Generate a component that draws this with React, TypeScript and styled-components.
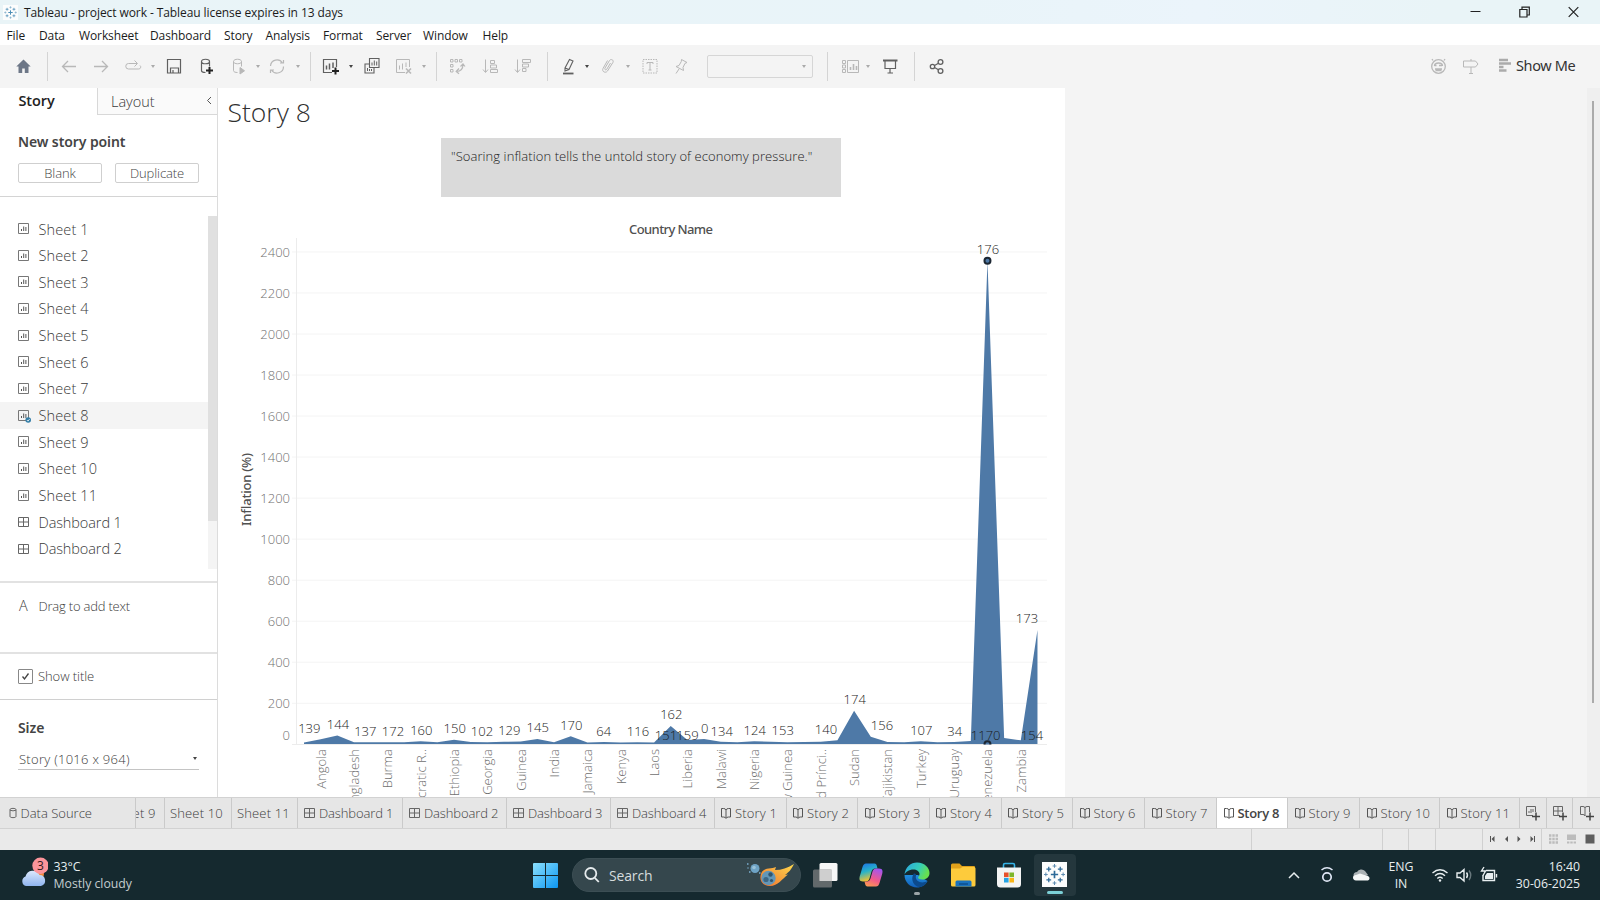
import React from "react";
import styled, { createGlobalStyle } from "styled-components";

const ui = `"Open Sans", "Noto Sans", sans-serif`;
const book = `"Noto Sans", "Open Sans", sans-serif`;
const light = `"Open Sans", "Noto Sans", sans-serif`;

const Global = createGlobalStyle`
  * { box-sizing: border-box; }
  body { margin: 0; background: #fff; overflow: hidden; }
  svg { display: block; flex: none; }
  svg text { white-space: pre; }
`;

const Window = styled.div`
  width: 1600px;
  height: 900px;
  display: flex;
  flex-direction: column;
  font-family: ${light};
  font-weight: 350;
  color: #333;
  overflow: hidden;
  white-space: nowrap;
`;

/* ---------- title bar and menu ---------- */
const TitleBar = styled.header`
  height: 24px;
  flex: none;
  display: flex;
  align-items: center;
  padding: 0 21px 0 3px;
  background: linear-gradient(90deg, #e9f4f7 0, #e9f4f9 60%, #ebf4fb 75%, #e9f4f7 90%);
`;
const WindowTitle = styled.span`
  margin-left: 6px;
  font: 400 12px ${ui};
  letter-spacing: -0.08px;
  color: #1b1b1b;
  flex: 1;
`;
const WindowButtons = styled.div`
  display: flex;
  gap: 38px;
`;
const MenuBar = styled.nav`
  height: 21px;
  flex: none;
  display: flex;
  align-items: center;
  padding: 1px 0 0 6.5px;
  background: #fff;
`;
const MenuItem = styled.span<{ $w: number }>`
  width: ${(p) => p.$w}px;
  font: 400 12px ${ui};
  letter-spacing: -0.1px;
  color: #1b1b1b;
`;

/* ---------- toolbar ---------- */
const Toolbar = styled.div`
  height: 43px;
  flex: none;
  display: flex;
  align-items: center;
  background: #f4f4f4;
  padding: 0 24px 1px 0;
`;
const Tool = styled.span<{ $ml: number; $dim?: boolean }>`
  width: 20px;
  margin-left: ${(p) => p.$ml}px;
  padding-bottom: 1px;
  flex: none;
  color: ${(p) => (p.$dim ? "#b8b8b8" : "#606060")};
`;
const Caret = styled.span<{ $ml: number; $dim?: boolean }>`
  width: 8px;
  margin-left: ${(p) => p.$ml}px;
  flex: none;
  display: flex;
  justify-content: center;
  &::after {
    content: "";
    border: 2.5px solid transparent;
    border-top: 3px solid ${(p) => (p.$dim ? "#aaa" : "#444")};
    border-bottom: 0;
  }
`;
const Separator = styled.span<{ $ml: number }>`
  width: 1px;
  height: 29px;
  margin-left: ${(p) => p.$ml}px;
  flex: none;
  background: #d4d4d4;
`;
const FitSelect = styled.span`
  width: 106px;
  height: 23px;
  margin-left: 16px;
  flex: none;
  display: flex;
  align-items: center;
  justify-content: flex-end;
  padding-right: 4px;
  border: 1px solid #d6d6d6;
  border-radius: 2px;
`;
const Spacer = styled.span`
  flex: 1;
`;
const ShowMe = styled.span`
  display: flex;
  align-items: center;
  gap: 5px;
  margin-left: 18.5px;
  padding-bottom: 2px;
  width: 77px;
  font: 400 14.5px ${book};
  letter-spacing: -0.35px;
  color: #333;
`;

/* ---------- body ---------- */
const Body = styled.main`
  flex: 1;
  min-height: 0;
  display: flex;
`;
const Sidebar = styled.aside`
  width: 218px;
  flex: none;
  display: flex;
  flex-direction: column;
  background: #fff;
  border-right: 1px solid #dcdcdc;
  color: #3a3a3a;
`;
const PaneTabs = styled.div`
  display: flex;
  height: 27px;
  flex: none;
`;
const ActivePane = styled.div`
  width: 97px;
  padding: 3px 0 0 18.5px;
  font-size: 14.5px;
  line-height: 20px;
  font-weight: 600;
  letter-spacing: -0.1px;
  color: #222;
`;
const OtherPane = styled.div`
  flex: 1;
  display: flex;
  justify-content: space-between;
  padding: 3px 4px 0 13px;
  font-size: 14.5px;
  line-height: 22px;
  border-left: 1px solid #d8d8d8;
  border-bottom: 1px solid #d8d8d8;
  background: #fafafa;
`;
const PaneHeading = styled.h3<{ $top: number }>`
  margin: ${(p) => p.$top}px 0 0 18px;
  font: 600 14px/20px ${book};
  letter-spacing: -0.1px;
  color: #444;
`;
const NewPoint = styled.section`
  height: 82px;
  flex: none;
  border-bottom: 1px solid #d4d4d4;
`;
const ButtonRow = styled.div`
  display: flex;
  gap: 13px;
  margin: 11px 0 0 18px;
`;
const SmallButton = styled.button`
  width: 84px;
  height: 20px;
  padding: 0;
  border: 1px solid #cfcfcf;
  border-radius: 2px;
  background: #fff;
  font: 350 13px/18px ${light};
  letter-spacing: -0.1px;
  color: #444;
`;
const ListArea = styled.section`
  height: 385.5px;
  flex: none;
  display: flex;
  padding-top: 18.7px;
  border-bottom: 2px solid #e2e2e2;
`;
const SheetList = styled.div`
  flex: 1;
`;
const SheetRow = styled.div<{ $on?: boolean; $tight?: boolean }>`
  height: 26.67px;
  display: flex;
  align-items: center;
  gap: ${(p) => (p.$tight ? 8.5 : 7.5)}px;
  padding: 0 0 0 17px;
  font-size: 14.5px;
  letter-spacing: ${(p) => (p.$tight ? "-0.1px" : "0.12px")};
  background: ${(p) => (p.$on ? "#f4f4f4" : "transparent")};
`;
const ListScroll = styled.div`
  width: 9.5px;
  height: 353px;
  background: #f4f4f4;
  &::before {
    content: "";
    display: block;
    height: 305px;
    background: #e0e0e0;
  }
`;
const DragText = styled.section`
  height: 71px;
  flex: none;
  display: flex;
  gap: 9.5px;
  padding: 13px 0 0 19px;
  font-size: 13px;
  line-height: 20px;
  letter-spacing: -0.2px;
  border-bottom: 2px solid #e2e2e2;
`;
const LetterA = styled.span`
  width: 10px;
  font-size: 14.5px;
`;
const TitleToggle = styled.section`
  height: 46.5px;
  flex: none;
  display: flex;
  align-items: center;
  gap: 5px;
  padding-left: 18px;
  font-size: 13px;
  letter-spacing: -0.07px;
  border-bottom: 1px solid #d0d0d0;
`;
const CheckBox = styled.span`
  width: 15px;
  height: 15px;
  border: 1px solid #888;
  border-radius: 1px;
`;
const SizeSelect = styled.div`
  display: flex;
  align-items: center;
  justify-content: space-between;
  width: 181px;
  height: 22px;
  margin: 10.5px 0 0 18px;
  padding-left: 1px;
  font-size: 13px;
  letter-spacing: 0.28px;
  border-bottom: 1px solid #c4c4c4;
`;

/* ---------- story canvas ---------- */
const Canvas = styled.section`
  width: 847px;
  flex: none;
  display: flex;
  flex-direction: column;
  background: #fff;
  overflow: hidden;
`;
const StoryTitle = styled.h1`
  margin: 8px 0 0 9.5px;
  height: 42px;
  flex: none;
  font-size: 26.5px;
  line-height: 33px;
  font-weight: 350;
  color: #303030;
`;
const Caption = styled.div`
  width: 400px;
  height: 59px;
  flex: none;
  margin-left: 223px;
  padding: 8px 10px;
  background: #dadada;
  font-size: 13px;
  line-height: 20px;
  letter-spacing: 0.07px;
  color: #222;
`;
const Backdrop = styled.div`
  flex: 1;
  display: flex;
  justify-content: flex-end;
  background: #f4f4f4;
`;
const PageScroll = styled.div`
  width: 13px;
  padding: 13px 0 0 5px;
  background: #efefef;
  &::before {
    content: "";
    display: block;
    width: 2px;
    height: 602px;
    background: #ababab;
  }
`;

/* ---------- bottom tabs and status ---------- */
const TabStrip = styled.nav`
  height: 32px;
  flex: none;
  display: flex;
  background: #e6e6e6;
  border-top: 1px solid #d2d2d2;
  border-bottom: 1px solid #d2d2d2;
`;
const Tab = styled.div<{ $w: number; $on?: boolean; $cut?: boolean; $ls?: number; $pl?: number }>`
  width: ${(p) => p.$w}px;
  flex: none;
  display: flex;
  align-items: center;
  justify-content: ${(p) => (p.$cut ? "flex-end" : "flex-start")};
  gap: 3px;
  padding: ${(p) => (p.$cut ? "0 8px 0 0" : `0 0 0 ${p.$pl ?? 5.5}px`)};
  overflow: hidden;
  border-right: 1px solid #cacaca;
  background: ${(p) => (p.$on ? "#fff" : "transparent")};
  font-size: 13px;
  letter-spacing: ${(p) => p.$ls ?? 0.15}px;
  font-weight: ${(p) => (p.$on ? 600 : 350)};
  color: ${(p) => (p.$on ? "#444" : "#3c3c3c")};
`;
const StatusBar = styled.div`
  height: 21px;
  flex: none;
  display: flex;
  justify-content: flex-end;
  background: #eaeaea;
`;
const StatusCell = styled.div<{ $w: number }>`
  width: ${(p) => p.$w}px;
  display: flex;
  align-items: center;
  justify-content: center;
  padding: 0 0 2px 1px;
  border-left: 1px solid #d0d0d0;
`;

/* ---------- taskbar ---------- */
const Taskbar = styled.footer`
  height: 50px;
  flex: none;
  display: flex;
  align-items: center;
  background: #15292f;
  font-family: ${ui};
  font-weight: 400;
  color: #e8eef0;
`;
const Weather = styled.div`
  width: 533px;
  display: flex;
  align-items: center;
  gap: 5.5px;
  padding: 1px 0 0 19px;
  font-size: 12.3px;
  line-height: 16.6px;
  letter-spacing: -0.03px;
`;
const Dim = styled.div`
  color: #c3cdd0;
`;
const SearchBox = styled.div`
  width: 229px;
  height: 34px;
  margin: 0 11px 0 14px;
  display: flex;
  align-items: center;
  padding: 0 5px 0 11px;
  gap: 9px;
  border-radius: 17px;
  border: 1px solid #3c4e54;
  background: #35474d;
  font-size: 14px;
  letter-spacing: -0.15px;
  color: #d5dcde;
`;
const Apps = styled.div`
  display: flex;
  padding-left: 9px;
`;
const AppSlot = styled.div<{ $on?: boolean; $run?: boolean }>`
  width: ${(p) => (p.$on ? 42 : 46)}px;
  height: 42px;
  margin-left: ${(p) => (p.$on ? 1.5 : 0)}px;
  display: flex;
  flex-direction: column;
  align-items: center;
  padding-top: 8px;
  border-radius: 4px;
  background: ${(p) => (p.$on ? "#24373d" : "transparent")};
  &::after {
    content: "";
    margin-top: 3.5px;
    width: ${(p) => (p.$on ? 16 : 6)}px;
    height: 3px;
    border-radius: 2px;
    background: ${(p) => (p.$on ? "#7cd0d6" : p.$run ? "#9ba5a8" : "transparent")};
  }
`;
const Tray = styled.div`
  flex: 1;
  display: flex;
  align-items: center;
  justify-content: flex-end;
  padding-right: 20px;
  font-size: 12.3px;
  line-height: 16.6px;
`;
const Language = styled.div`
  width: 30px;
  margin: 0 15px 0 16px;
  padding-top: 1px;
  text-align: center;
`;
const Clock = styled.div`
  width: 67px;
  margin-left: 15px;
  padding-top: 1px;
  text-align: right;
`;

/* ---------- icons ---------- */
const Icon = ({ children, w = 20, h = 20 }: { children: React.ReactNode; w?: number; h?: number }) => (
  <svg width={w} height={h} viewBox={`0 0 ${w} ${h}`} fill="none" stroke="currentColor" strokeWidth="1">
    {children}
  </svg>
);
const cyl = "M5.5 5.5c0-3 8-3 8 0s-8 3-8 0v9c0 1.5 2 2 4 2M13.5 5.5v5";

const icons: Record<string, React.ReactNode> = {
  home: <path d="M9.500 3.500 2.300 10.500H4.500V17h3.700v-4.500h2.600V17h3.700v-6.500h2.200z" fill="#6d7787" stroke="none" />,
  back: <path d="M17 10.500H3.500M9 5 3.500 10.500 9 16" strokeWidth="1.300" />,
  forward: <path d="M3 10.500h13.500M11 5l5.500 5.500L11 16" strokeWidth="1.300" />,
  replay: <path d="M14 7.500H5.500a2.500 2.500 0 0 0 0 5.500h10a2 2 0 0 0 1.500-3.500M11.500 4.500l3 3-3 3" />,
  save: <path d="M3.500 3.500h13v13.500h-13zM6.500 17v-5h8v5M9 17v-3" strokeWidth="1.200" />,
  addData: (
    <>
      <path d={cyl} strokeWidth="1.200" />
      <path d="M13.500 11v7M10 14.500h7" stroke="#222" strokeWidth="2" />
    </>
  ),
  playData: (
    <>
      <path d={cyl} />
      <path d="M12 11.500v6.500l4.500-3.200z" fill="currentColor" />
    </>
  ),
  refresh: <path d="M3.500 10a6.500 6.500 0 0 1 12-3M16.500 10.500a6.500 6.500 0 0 1-12 3.500M13 7h3.500V4M7 14H3.500v3" strokeWidth="1.200" />,
  newSheet: (
    <>
      <path d="M11 16.500H2.500v-13h13V11" strokeWidth="1.200" />
      <path d="M5.500 13.500v-4M8.500 13.500v-6M12 12V6.500" strokeWidth="1.500" />
      <path d="M14.500 11.500v7M11 15h7" stroke="#222" strokeWidth="2" />
    </>
  ),
  duplicate: (
    <>
      <path d="M7.500 2.500h9.500v9H7.500zM7.500 8h-4.500v9h9v-5.500" strokeWidth="1.100" />
      <path d="M10 9.500v-3M12.300 9.500v-5M14.700 9.500v-4M5.500 15v-3M7.500 15v-2M9.500 15v-2" />
    </>
  ),
  clear: (
    <>
      <path d="M11 16.500H2.500v-13h13V11M5.500 13.500v-4M8.500 13.500v-6M12 11V6.500" />
      <path d="m12 12.500 5 5m0-5-5 5" strokeWidth="1.600" />
    </>
  ),
  swap: (
    <>
      <path d="M3.500 3.500h2.500v2.500h-2.500zM8 3.500h2.500v2.500H8zM12.500 3.500H15v2.500h-2.500zM3.500 8.500h2.500v2.500h-2.500zM3.500 13.500h2.500v2.500h-2.500z" />
      <path d="M16 8c0 5-2 7.500-6.500 7.500M12 12.500l-2.800 3 2.800 2.300M13.500 10.500 16 8l2 2.500" strokeWidth="1.200" />
    </>
  ),
  sortAsc: <path d="M4.500 3.500V16M2 13.500l2.500 3 2.500-3M9.500 4.500h4v3h-4zM9.500 9h6v3h-6zM9.500 13.500h7v3h-7z" />,
  sortDesc: <path d="M4.500 3.500V16M2 13.500l2.500 3 2.500-3M9.500 3.500h8v3h-8zM9.500 8h6v3h-6zM9.500 12.500h3.500v3h-3.500z" />,
  pen: (
    <>
      <path d="M4 17.500h10.500" strokeWidth="1.800" />
      <path d="M6 12 10.500 3.500l3.500 1.500-4 8.500L6 15zM6 12l4 1.500" strokeWidth="1.100" />
    </>
  ),
  clip: <path d="m7 12 4.500-7.500c1.500-2 4.500-.5 3.500 1.800L9.500 15c-2 2.700-6 .5-4.500-2.500l4.500-8M7 12c-.8 1.800 1 2.500 1.800 1.200L12.500 7" />,
  text: (
    <>
      <path d="M3 3.500h14v13.500H3z" strokeDasharray="1.500 1" />
      <path d="M7 8V6.500h6V8M10 6.500V14M8.500 14h3" />
    </>
  ),
  pin: <path d="m10.500 3.500 5.500 3-2 .8-2 4.200.5 3-7.500-4 3-1 2.300-4zM8 13l-3 4.500" />,
  fit: (
    <>
      <path d="M2.500 4.500h3v3h-3zM2.500 9h3v3h-3zM2.500 13.500h3v3h-3zM7.500 4.500h11v12h-11z" />
      <path d="M10.500 14v-3M13.500 14V8M16.500 14v-4" strokeWidth="1.600" />
    </>
  ),
  present: (
    <>
      <path d="M3 4.500h14.500" strokeWidth="2" />
      <path d="M5 5v7.500h10.500V5M10 12.500v4M7.500 17H13" strokeWidth="1.200" />
    </>
  ),
  share: (
    <g strokeWidth="1.300">
      <circle cx="5.500" cy="10.500" r="2.200" />
      <circle cx="13.500" cy="6" r="2.400" />
      <circle cx="13.500" cy="15" r="2.400" />
      <path d="m7.500 9.500 4-2.300M7.500 11.500l4 2.300" />
    </g>
  ),
  face: (
    <>
      <circle cx="10.500" cy="10.500" r="6.800" strokeWidth="1.300" />
      <path d="M6.500 10c0-4 8-4 8 0M6.500 9.500h2M11 9.500h3M7 13h7M7.500 14.500h6M5 4.500 4 3M16 4.500l1-1.500" strokeWidth="1.300" />
    </>
  ),
  sign: <path d="M2.500 5h12l2.500 3-2.500 3h-12zM10 3v2M10 11v7M8 17.500h4" />,
};

const SheetIcon = ({ checked }: { checked?: boolean }) => (
  <Icon w={14} h={14}>
    <path d="M1.500 1.500h10v10h-10z" stroke="#777" />
    <path d="M4.500 9V7M6.700 9V4.500M8.900 9V5" stroke="#555" />
    {checked && (
      <>
        <circle cx="11.200" cy="11" r="2.800" fill="#357fa8" stroke="none" />
        <path d="m10 11.100 1 1 1.600-2" stroke="#fff" strokeWidth=".8" />
      </>
    )}
  </Icon>
);
const GridIcon = () => (
  <Icon w={13} h={14}>
    <path d="M1.500 2.500h10v9h-10zM6.500 2.500v9M1.500 7h10" stroke="#666" />
  </Icon>
);
const BookIcon = () => (
  <Icon w={12} h={14}>
    <path d="M1.500 2.500h2q2 0 2.500 1.500 .5-1.500 2.500-1.500h2v8.500h-2q-2 0-2.500 1.500-.5-1.500-2.500-1.500h-2zM6 4v8" stroke="#555" />
  </Icon>
);
const DbIcon = () => (
  <Icon w={10} h={14}>
    <path d="M2 3.500c0-1.500 6-1.500 6 0v7c0 1.500-6 1.500-6 0zM2 4.200q3 1.300 6 0" stroke="#666" />
  </Icon>
);
const PlusIcon = ({ d }: { d: string }) => (
  <Icon w={18} h={18}>
    <path d={d} stroke="#666" />
    <path d="M12 8.500v8M8 12.500h8" stroke="#444" strokeWidth="1.500" />
  </Icon>
);
const TableauMark = ({ size, color }: { size: number; color: string }) => (
  <svg width={size} height={size} viewBox="0 0 24 24">
    <path d="M0 0h24v24H0z" fill="#fcfdfd" />
    <g stroke={color} strokeWidth="1.200">
      <path d="M12 8.500v7M8.500 12h7" strokeWidth="1.600" />
      <path d="M6.500 4.500v4.500M4.200 6.800h4.600M17.500 4.500v4.500M15.200 6.800h4.600M6.500 15v4.500M4.200 17.200h4.600M17.500 15v4.500M15.200 17.200h4.600" />
      <path d="M12 2v3.600M10.200 3.800h3.600M12 18.400V22M10.200 20.200h3.600M3.700 10.200v3.600M1.900 12h3.600M20.300 10.200v3.600M18.500 12h3.600" strokeWidth="1" opacity=".75" />
    </g>
  </svg>
);

/* ---------- data ---------- */
const menu: [string, number][] = [
  ["File", 32.5], ["Data", 40], ["Worksheet", 71], ["Dashboard", 74], ["Story", 41.5],
  ["Analysis", 57.5], ["Format", 53], ["Server", 47], ["Window", 59.5], ["Help", 40],
];

type Part = { k: string; ml: number; dim?: boolean };
const tools: Part[] = [
  { k: "home", ml: 13.5 }, { k: "|", ml: 13 }, { k: "back", ml: 11.5, dim: true }, { k: "forward", ml: 12, dim: true },
  { k: "replay", ml: 11.5, dim: true }, { k: "v", ml: 6, dim: true }, { k: "save", ml: 7.5 }, { k: "addData", ml: 12 },
  { k: "playData", ml: 11.5, dim: true }, { k: "v", ml: 6, dim: true }, { k: "refresh", ml: 5.5, dim: true },
  { k: "v", ml: 6.5, dim: true }, { k: "|", ml: 8.5 }, { k: "newSheet", ml: 10 }, { k: "v", ml: 6 },
  { k: "duplicate", ml: 7 }, { k: "clear", ml: 11.5, dim: true }, { k: "v", ml: 6, dim: true }, { k: "|", ml: 8.5 },
  { k: "swap", ml: 10, dim: true }, { k: "sortAsc", ml: 13.5, dim: true }, { k: "sortDesc", ml: 12.5, dim: true },
  { k: "|", ml: 13.5 }, { k: "pen", ml: 11.5 }, { k: "v", ml: 4 }, { k: "clip", ml: 6.5, dim: true },
  { k: "v", ml: 6.5, dim: true }, { k: "text", ml: 8, dim: true }, { k: "pin", ml: 11, dim: true },
];
const toolsAfter: Part[] = [
  { k: "|", ml: 14 }, { k: "fit", ml: 11.5, dim: true }, { k: "v", ml: 4, dim: true }, { k: "present", ml: 8.5 },
  { k: "|", ml: 13.5 }, { k: "share", ml: 12 },
];
const ToolPart = ({ k, ml, dim }: Part) =>
  k === "|" ? (
    <Separator $ml={ml} />
  ) : k === "v" ? (
    <Caret $ml={ml} $dim={dim} />
  ) : (
    <Tool $ml={ml} $dim={dim}>
      <Icon>{icons[k]}</Icon>
    </Tool>
  );

const sheets = [...Array.from({ length: 11 }, (_, i) => `Sheet ${i + 1}`), "Dashboard 1", "Dashboard 2"];

const stories = [72, 71.5, 71.5, 72, 71.5, 72, 72, 71, 72, 80, 80];
const dashboards = [105, 104, 104, 104];

/* Height of the area's edge at each country, left to right, in chart coordinates. */
const edge = [
  742.5, 739.3, 735.5, 742.3, 742.3, 742.3, 742.2, 741.3, 742.3, 739.7, 742, 742.3, 741.7, 741.5, 739, 742.3,
  736.3, 742.5, 742, 742.5, 742.3, 742.5, 726, 740, 739, 741.7, 742.3, 741.2, 741.7, 742.3, 742, 741.7, 740.3,
  710.7, 736.7, 742, 742.3, 741.3, 742.2, 742, 741, 261, 738, 740.3, 630,
];
const px = (i: number) => 304 + i * 16.67;
const countries = [
  "Angola", "Bangladesh", "Burma", "Democratic R..", "Ethiopia", "Georgia", "Guinea", "India", "Jamaica", "Kenya",
  "Laos", "Liberia", "Malawi", "Nigeria", "Papua New Guinea", "Sao Tome and Prínci..", "Sudan", "Tajikistan", "Turkey",
  "Uruguay", "Venezuela", "Zambia",
];
const marks: [string, number, number][] = [
  ["139", 309.3, 728], ["144", 338, 724], ["137", 365.3, 731.7], ["172", 393, 731], ["160", 421.3, 730],
  ["150", 454.7, 728.3], ["102", 482, 731.7], ["129", 509.3, 730], ["145", 537.7, 727.3], ["170", 571.3, 725],
  ["64", 603.7, 731], ["116", 638, 731], ["162", 671.3, 714], ["151", 666, 735], ["159", 687.5, 735],
  ["0", 704.7, 728.5], ["134", 721.7, 731], ["124", 754.7, 730], ["153", 782.7, 730], ["140", 826, 729],
  ["174", 854.7, 699], ["156", 882, 725], ["107", 921.3, 730], ["34", 954.7, 731], ["1170", 985.7, 735],
  ["154", 1032, 735], ["176", 988, 249], ["173", 1027, 618],
];

const Chart = () => (
  <svg width="847" height="600" viewBox="218 197 847 600" fontFamily={light} fontSize="13" fontWeight="350">
    <text x="671" y="233.500" fontFamily={book} fontWeight="500" textAnchor="middle" fill="#505050" textLength="84">Country Name</text>
    <text transform="translate(251 489.500) rotate(-90)" fontFamily={book} fontWeight="500" textAnchor="middle" fill="#505050" textLength="73">
      Inflation (%)
    </text>
    {Array.from({ length: 12 }, (_, i) => 2400 - i * 200).map((v) => {
      const y = 744.300 - v * 0.20515;
      return (
        <g key={v}>
          <path d={`M292 ${y}H1047`} stroke="#f4f4f4" />
          <text x="290" y={y + 4.800} textAnchor="end" fill="#707070">{v}</text>
        </g>
      );
    })}
    <text x="290" y="740" textAnchor="end" fill="#707070">0</text>
    <path d="M296.500 238V744M292 744.500H1047" stroke="#ececec" />
    <path d={`M304 744L${edge.map((y, i) => `${px(i)} ${y}`).join("L")}V744z`} fill="#4e79a7" />
    <clipPath id="plot">
      <path d="M296 238h752v506.500H296z" />
    </clipPath>
    <g clipPath="url(#plot)" fill="#4e79a7" stroke="#1c2733" strokeWidth="2">
      <circle cx={px(41)} cy="260.700" r="3" />
      <circle cx={px(41)} cy="744.300" r="3" />
    </g>
    {marks.map(([t, x, y]) => (
      <text key={t} x={x} y={y + 4.500} textAnchor="middle" fill="#1c1c1c">{t}</text>
    ))}
    {countries.map((c, i) => (
      <text key={c} transform={`translate(${px(i * 2 + 1) + 5} 749) rotate(-90)`} textAnchor="end" fill="#707070">{c}</text>
    ))}
  </svg>
);

export default function App() {
  return (
    <Window>
      <Global />
      <TitleBar>
        <TableauMark size={15} color="#4b8db5" />
        <WindowTitle>Tableau - project work - Tableau license expires in 13 days</WindowTitle>
        <WindowButtons>
          <Icon w={11} h={12}><path d="M.5 5.500h10" stroke="#222" /></Icon>
          <Icon w={11} h={12}><path d="M.8 3.500h7.200v7.500H.8zM3 3.500V1.200h7.300V9H8" stroke="#222" strokeWidth="1.200" /></Icon>
          <Icon w={11} h={12}><path d="m.7 1.200 9.600 9.600m0-9.600L.7 10.800" stroke="#222" strokeWidth="1.200" /></Icon>
        </WindowButtons>
      </TitleBar>
      <MenuBar>
        {menu.map(([t, w]) => <MenuItem key={t} $w={w}>{t}</MenuItem>)}
      </MenuBar>
      <Toolbar>
        {tools.map((t, i) => <ToolPart key={i} {...t} />)}
        <FitSelect><Caret $ml={0} $dim /></FitSelect>
        {toolsAfter.map((t, i) => <ToolPart key={i} {...t} />)}
        <Spacer />
        <Tool $ml={0} $dim><Icon>{icons.face}</Icon></Tool>
        <Tool $ml={12.5} $dim><Icon>{icons.sign}</Icon></Tool>
        <ShowMe>
          <Icon w={12} h={14}>
            <path d="M0 2h9M0 5.500h12M0 9h4.500M0 12.500h7.500" stroke="#ababab" strokeWidth="2.400" />
          </Icon>
          Show Me
        </ShowMe>
      </Toolbar>
      <Body>
        <Sidebar>
          <PaneTabs>
            <ActivePane>Story</ActivePane>
            <OtherPane>
              Layout
              <Icon w={8} h={20}><path d="M6 6 2.500 9.500 6 13" stroke="#555" /></Icon>
            </OtherPane>
          </PaneTabs>
          <NewPoint>
            <PaneHeading $top={17}>New story point</PaneHeading>
            <ButtonRow>
              <SmallButton>Blank</SmallButton>
              <SmallButton>Duplicate</SmallButton>
            </ButtonRow>
          </NewPoint>
          <ListArea>
            <SheetList>
              {sheets.map((s, i) => (
                <SheetRow key={s} $on={i === 7} $tight={i > 10}>
                  {i > 10 ? <GridIcon /> : <SheetIcon checked={i === 7} />}
                  {s}
                </SheetRow>
              ))}
            </SheetList>
            <ListScroll />
          </ListArea>
          <DragText><LetterA>A</LetterA>Drag to add text</DragText>
          <TitleToggle>
            <CheckBox><Icon w={13} h={13}><path d="m3.500 6.500 2 2.500 4-5.500" stroke="#444" strokeWidth="1.300" /></Icon></CheckBox>
            Show title
          </TitleToggle>
          <PaneHeading $top={17.5}>Size</PaneHeading>
          <SizeSelect>Story (1016 x 964)<Caret $ml={0} /></SizeSelect>
        </Sidebar>
        <Canvas>
          <StoryTitle>Story 8</StoryTitle>
          <Caption>"Soaring inflation tells the untold story of economy pressure."</Caption>
          <Chart />
        </Canvas>
        <Backdrop><PageScroll /></Backdrop>
      </Body>
      <TabStrip>
        <Tab $w={135.5} $pl={7.5} $ls={0}><DbIcon />Data Source</Tab>
        <Tab $w={29} $cut>Sheet 9</Tab>
        <Tab $w={67}>Sheet 10</Tab>
        <Tab $w={66}>Sheet 11</Tab>
        {dashboards.map((w, i) => <Tab key={i} $w={w} $ls={-0.12}><GridIcon />Dashboard {i + 1}</Tab>)}
        {stories.map((w, i) => <Tab key={i} $w={w} $on={i === 7} $ls={i === 7 ? -0.3 : 0.15}><BookIcon />Story {i + 1}</Tab>)}
        <Tab $w={27} $pl={4}><PlusIcon d="M9 11.500H2.500v-9h9V8M5 9V7M7 9V5M9 8V5" /></Tab>
        <Tab $w={26} $pl={4}><PlusIcon d="M9 11.500H2.500v-9h9V8M7 2.500v9M2.500 7h9" /></Tab>
        <Tab $w={28} $pl={4.5}><PlusIcon d="M7 12q0-1.500-2-1.500H2.500v-8H5q2 0 2 1.500 0-1.500 2-1.500h2.500V8M7 4v8" /></Tab>
      </TabStrip>
      <StatusBar>
        <StatusCell $w={130.5} />
        <StatusCell $w={26} />
        <StatusCell $w={27.500} />
        <StatusCell $w={47} />
        <StatusCell $w={59}>
          <Icon w={50} h={10}>
            <path d="M6.500 2v6L3.500 5zM20 2v6l-3-3zM29.500 2v6l3-3zM42.500 2v6l3-3z" fill="#555" stroke="none" />
            <path d="M2.500 2v6M46.500 2v6" stroke="#555" />
          </Icon>
        </StatusCell>
        <StatusCell $w={59}>
          <Icon w={46} h={10}>
            <path d="M0 1.500h9M0 5h9M0 8.500h9" strokeWidth="2.300" strokeDasharray="2.400 .9" stroke="#bcbcbc" />
            <path d="M18 .500h9v5.500h-9z" fill="#bcbcbc" stroke="none" />
            <path d="M18 8.500h9" strokeWidth="2.200" strokeDasharray="2.400 .9" stroke="#bcbcbc" />
            <path d="M36.500 .500h9v9h-9z" fill="#5e5e5e" stroke="none" />
          </Icon>
        </StatusCell>
      </StatusBar>
      <Taskbar>
        <Weather>
          <svg width="29" height="38" viewBox="0 0 29 38">
            <defs>
              <linearGradient id="cloud" x2="0" y2="1"><stop stopColor="#dbe8fd" /><stop offset="1" stopColor="#8fb4ee" /></linearGradient>
            </defs>
            <circle cx="20" cy="17" r="5" fill="#f0883a" />
            <path d="M7 29a5 5 0 0 1-.500-9.500A7.500 7.500 0 0 1 20.500 18 5.600 5.600 0 0 1 22 29z" fill="url(#cloud)" />
            <circle cx="21.500" cy="8.700" r="8.200" fill="#fb949b" />
            <text x="21.500" y="13" fontSize="12" textAnchor="middle" fill="#33191c" fontFamily={ui}>3</text>
          </svg>
          <div>33°C<Dim>Mostly cloudy</Dim></div>
        </Weather>
        <svg width="25" height="25" viewBox="0 0 25 25">
          <defs>
            <linearGradient id="win" x2="1" y2="1"><stop stopColor="#8be0fd" /><stop offset="1" stopColor="#0c96f2" /></linearGradient>
          </defs>
          <path d="M1 0h11v12H0V1q0-1 1-1zM13 0h11q1 0 1 1v11H13zM0 13h12v12H1q-1 0-1-1zM13 13h12v11q0 1-1 1H13z" fill="url(#win)" />
        </svg>
        <SearchBox>
          <Icon w={16} h={18}><circle cx="6.800" cy="7.500" r="5.500" stroke="#e6ebed" strokeWidth="1.800" /><path d="m10.800 11.800 4 4.200" stroke="#e6ebed" strokeWidth="1.800" /></Icon>
          Search
          <Spacer />
          <svg width="49" height="28" viewBox="0 0 49 28">
            <defs>
              <linearGradient id="fire" x1="0" y1="1" x2="1" y2="0"><stop stopColor="#f0702f" /><stop offset="1" stopColor="#ffdb4d" /></linearGradient>
            </defs>
            <path d="M15 13C17 6 26 8 30 6l-1 3C36 9 41 7 48 3c-3 6-5 8-9 11l3-.500C36 18 32 25 24 25c-8 0-11-6-9-12z" fill="url(#fire)" />
            <circle cx="22.500" cy="17" r="7.200" fill="#6396b8" />
            <circle cx="24.500" cy="13.500" r="2.200" fill="#31556f" /><circle cx="20" cy="18.500" r="2.600" fill="#3d6785" /><circle cx="25.500" cy="19.500" r="1.600" fill="#31556f" />
            <circle cx="9" cy="7.500" r="4.500" fill="#6ea3c5" /><circle cx="8" cy="6.500" r="1.800" fill="#9ac3da" />
            <path d="M1 3h1.500M3 11h1.500M1.500 7h1M13 12h1.500" stroke="#7cb0d0" strokeWidth="1.500" />
          </svg>
        </SearchBox>
        <svg width="27" height="27" viewBox="0 0 27 27">
          <rect x="7.500" y="1" width="18" height="18" rx="1.500" fill="#f7f7f7" />
          <rect x="1" y="7.500" width="19" height="18" rx="1.500" fill="#76797a" opacity=".8" />
          <path d="M7.500 7.500H20V19H7.500z" fill="#cfcfcf" />
        </svg>
        <Apps>
          <AppSlot>
            <svg width="26" height="26" viewBox="0 0 26 26">
              <defs>
                <linearGradient id="cpA" x2=".3" y2="1"><stop stopColor="#1d6fe8" /><stop offset=".5" stopColor="#27b3c9" /><stop offset="1" stopColor="#f5c22e" /></linearGradient>
                <linearGradient id="cpB" x1=".7" x2=".3" y2="1"><stop stopColor="#a355f0" /><stop offset=".6" stopColor="#f25a8a" /><stop offset="1" stopColor="#fb9654" /></linearGradient>
              </defs>
              <path d="M8 1.500h8.500q2 0 2.500 3l.500 2h-2.500q-2.500 0-3.500 3l-2 7q-1 3-3.500 3H5c-4 0-4-3-3-6L4.500 5Q5.500 1.500 8 1.500z" fill="url(#cpA)" />
              <path d="M18 24.500H9.500q-2 0-2.500-3l-.500-2H9q2.500 0 3.500-3l2-7q1-3 3.500-3h3c4 0 4 3 3 6L21.500 21q-1 3.500-3.500 3.500z" fill="url(#cpB)" />
            </svg>
          </AppSlot>
          <AppSlot $run>
            <svg width="26" height="26" viewBox="0 0 26 26">
              <defs>
                <linearGradient id="edA" x2="1" y2=".4"><stop stopColor="#2ba4e4" /><stop offset=".6" stopColor="#35cdb8" /><stop offset="1" stopColor="#67df50" /></linearGradient>
                <linearGradient id="edB" x2="0" y2="1"><stop stopColor="#1f8ee0" /><stop offset="1" stopColor="#135fb8" /></linearGradient>
              </defs>
              <path d="M.5 13C.5 20 6 25.500 13 25.500c4.500 0 8.500-2.500 10.500-6.500L14 13z" fill="url(#edB)" />
              <path d="M.500 13C1 5 7 .500 13 .500 21 .500 25.500 6 25.500 11c0 4-3 6.500-7 6.500-3 0-4.500-1-4.500-2 0-.8 1.500-1.300 1.500-3.500 0-2.500-3-4.500-6-4.500C5 7.500 1 10 .500 13z" fill="url(#edA)" />
              <path d="M9.500 12c-3.500 6 1 13.500 7 13 2.500-.500 5.500-2.500 7-6-6 3.500-13 0-11.500-5.500 .500-1.500-1.500-2.500-2.500-1.500z" fill="#0c4a8c" />
            </svg>
          </AppSlot>
          <AppSlot>
            <svg width="26" height="26" viewBox="0 0 26 26">
              <path d="M1 3q0-1.500 1.500-1.500h7L12 4h12q1 0 1 1v4H1z" fill="#e0a11b" />
              <path d="M1 6.500h9L12.500 5H24q1.500 0 1.500 1.500V23q0 1.500-1.500 1.500H2.500Q1 24.500 1 23z" fill="#fdcb3c" />
              <path d="M5.500 24.500V20q0-1.500 1.500-1.500h13q1.500 0 1.500 1.500v4.500z" fill="#1a72bd" />
              <path d="M9 22h9" stroke="#0f4f8c" strokeWidth="1.500" />
            </svg>
          </AppSlot>
          <AppSlot>
            <svg width="26" height="26" viewBox="0 0 26 26">
              <path d="M7.500 6V3q0-1.500 1.500-1.500h8q1.500 0 1.500 1.500v3" fill="none" stroke="#36b4e8" strokeWidth="1.600" />
              <path d="M1 5.500h24V22q0 3.500-3.500 3.500h-17Q1 25.500 1 22z" fill="#f3f4f4" />
              <path d="M8 10.500h4.600v4.600H8z" fill="#e8512b" /><path d="M13.400 10.500H18v4.600h-4.600z" fill="#7cb62b" />
              <path d="M8 15.900h4.600v4.600H8z" fill="#25a3e5" /><path d="M13.400 15.900H18v4.600h-4.600z" fill="#f8b517" />
            </svg>
          </AppSlot>
          <AppSlot $on><TableauMark size={25} color="#2c6a99" /></AppSlot>
        </Apps>
        <Tray>
          <Icon w={60} h={20}>
            <path d="m2 13 5-5 5 5" stroke="#e8eef0" strokeWidth="1.500" />
            <circle cx="40" cy="12" r="4.200" stroke="#dfe6f5" strokeWidth="1.700" />
            <path d="M34.500 5q5.500-4.500 11 0" stroke="#dfe6f5" strokeWidth="1.500" />
          </Icon>
          <Icon w={23} h={14}>
            <path d="M10 11a3.500 3.500 0 0 1 0-7A5 5 0 0 1 18 3l3 4z" fill="#aab1b4" stroke="none" />
            <path d="M9 12.500q-3-.500-3-3 0-2 3-2.500l4-1.500 6 2q3.500.500 3.500 2.700 0 2.300-3 2.300z" fill="#f5f7f7" stroke="none" />
          </Icon>
          <Language>ENG<br />IN</Language>
          <svg width="67" height="20" viewBox="0 0 67 20" fill="none" stroke="#e8eef0" strokeWidth="1.400">
            <path d="M1.500 8q7.500-6.500 15 0M4 10.800q5-4.400 10 0M6.300 13.500q2.700-2.300 5.400 0" />
            <circle cx="9" cy="15.500" r="1.200" fill="#e8eef0" stroke="none" />
            <path d="M26 8h3l4-3.500v11.500l-4-3.500h-3zM35.500 7.500q2 2.700 0 5.500" />
            <path d="M38 5.500q3.500 4.700 0 9.500" stroke="#69787d" />
            <path d="M55 5.500h8.500v10H52V10M65.500 9v3.500" />
            <path d="M56 8h6v6h-8v-3z" fill="#e8eef0" stroke="none" />
            <path d="m53 2-2.500 4h4L52 10.500" />
          </svg>
          <Clock>16:40<br />30-06-2025</Clock>
        </Tray>
      </Taskbar>
    </Window>
  );
}
